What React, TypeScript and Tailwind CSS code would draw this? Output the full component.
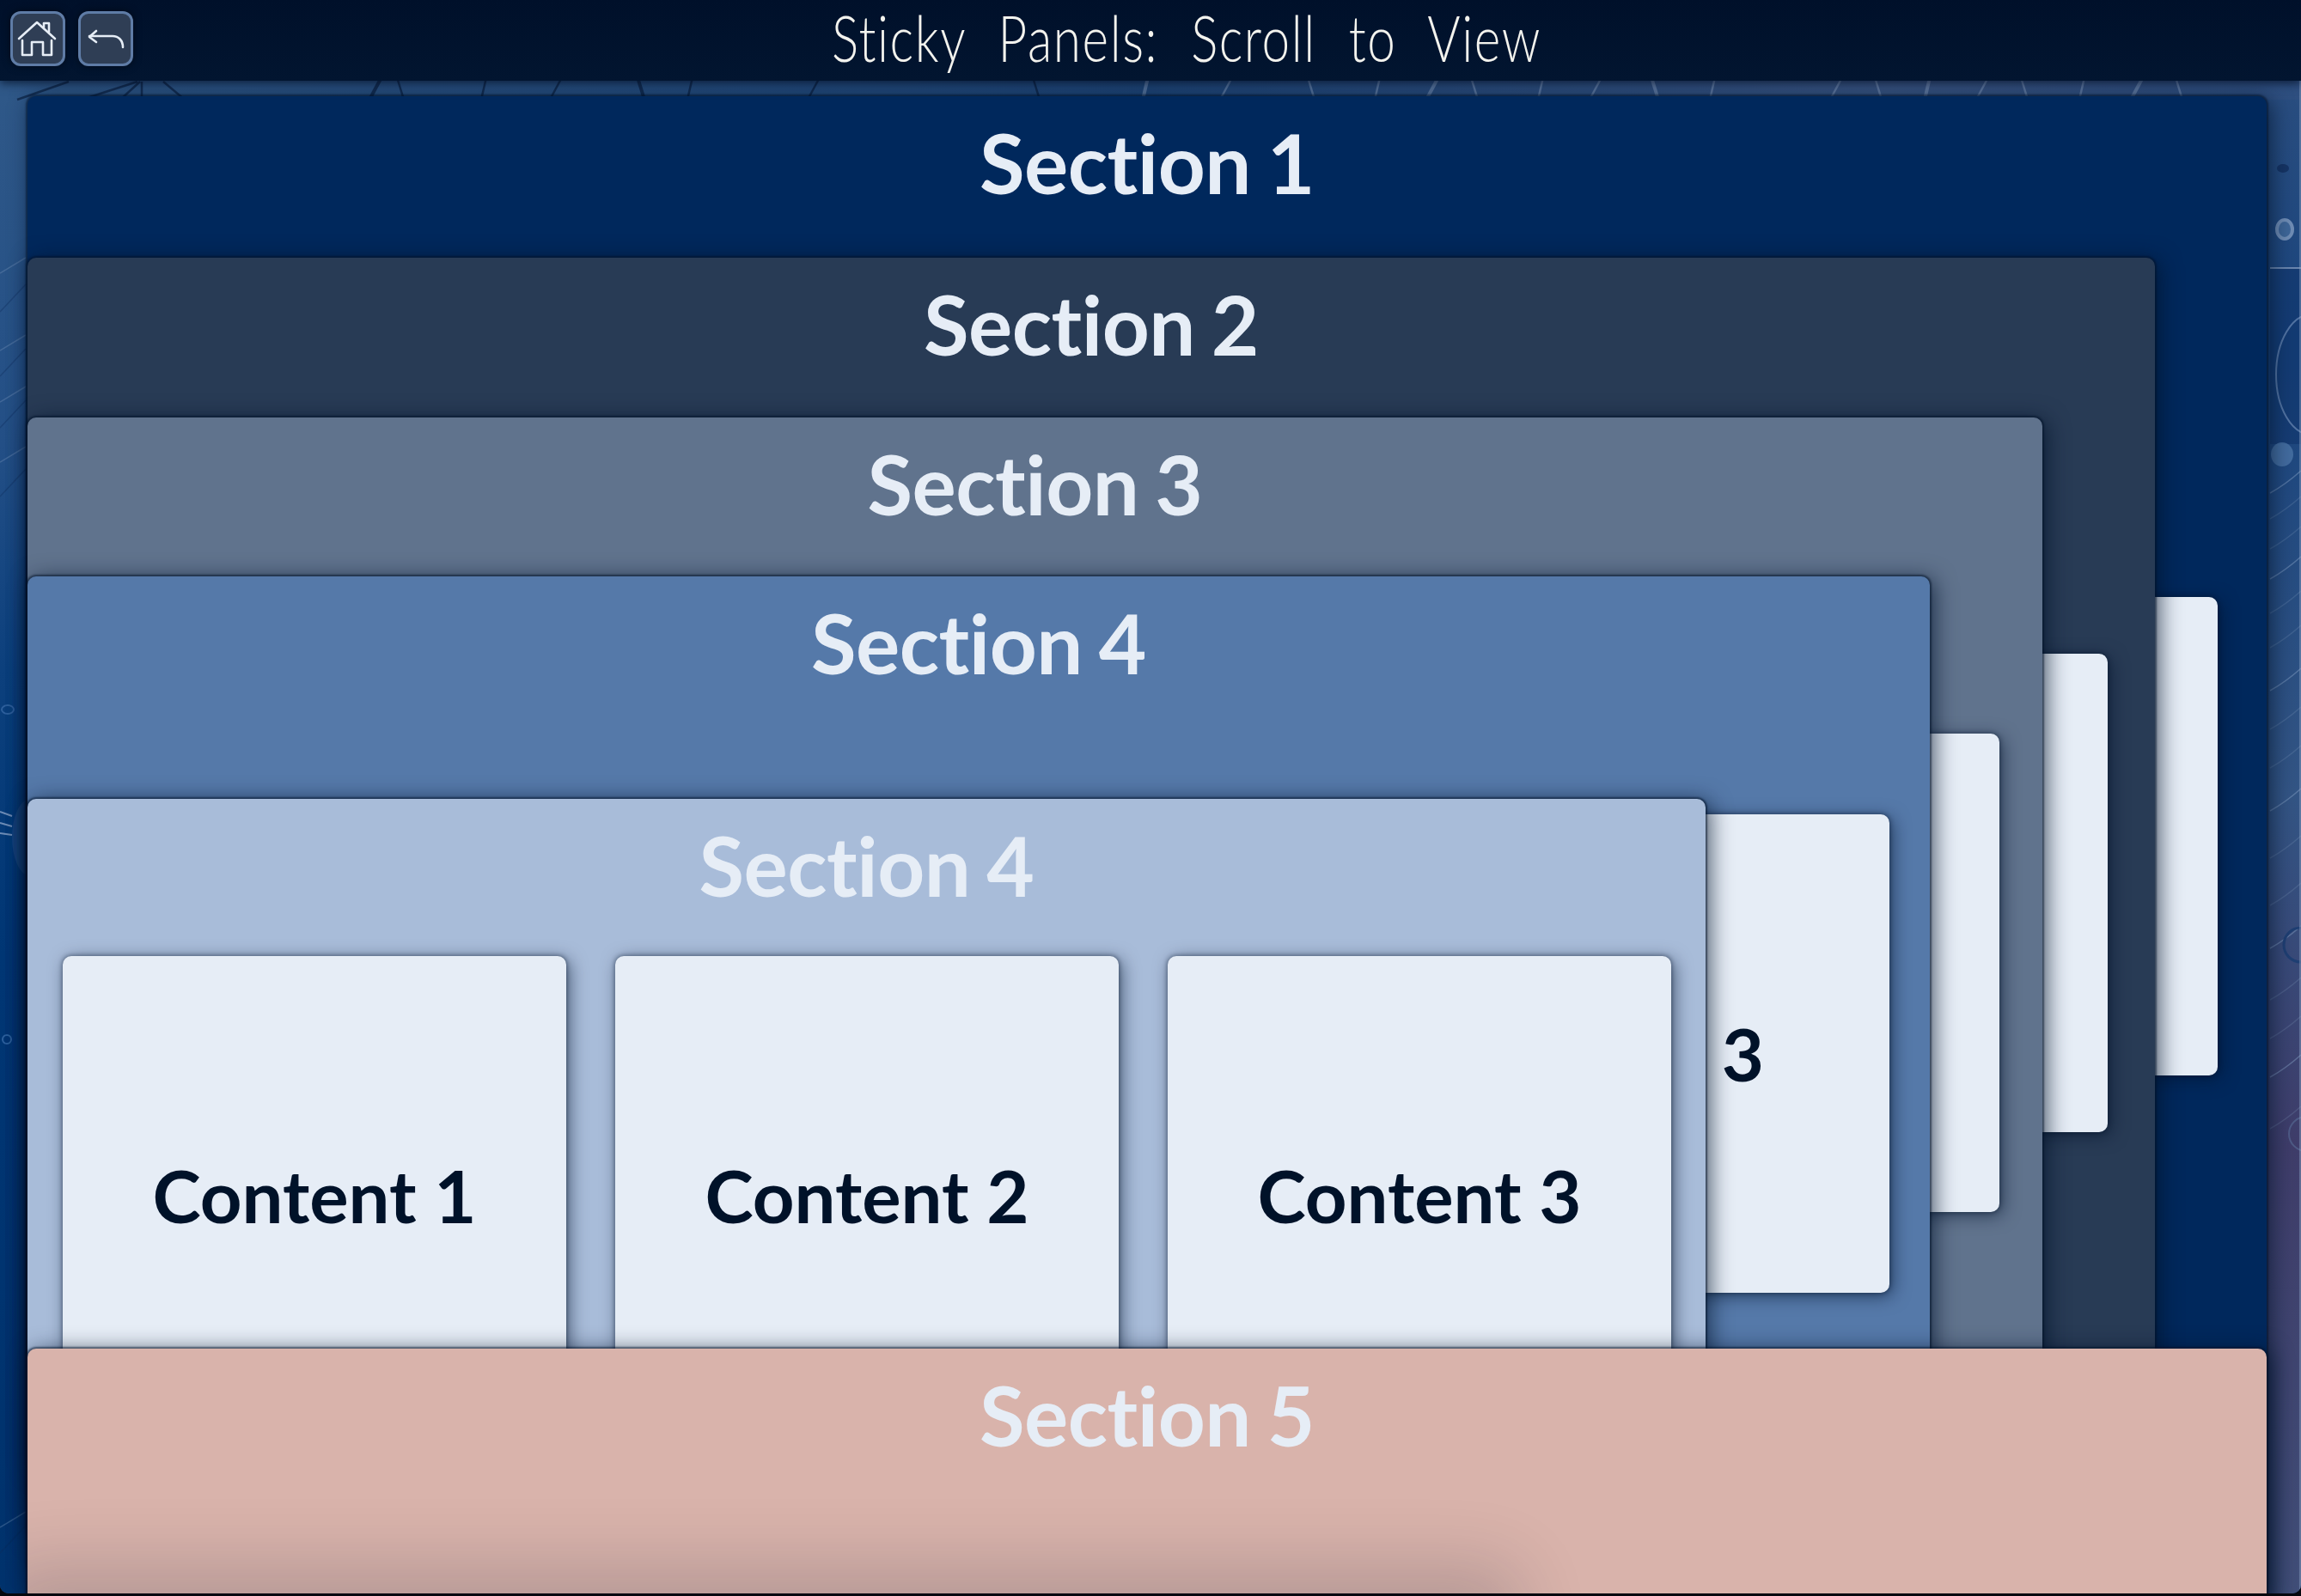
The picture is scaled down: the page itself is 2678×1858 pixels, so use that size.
const panelShadow = "shadow-[0_0_2px_2px_rgba(0,18,41,0.55),5px_3px_26px_rgba(0,18,41,0.7)]";
const cardShadow = "shadow-[0_0_5px_1px_rgba(0,18,41,0.4),4px_4px_20px_rgba(0,18,41,0.55)]";

function Backdrop() {
  const topLines = [430, 470, 560, 640, 750, 800, 940, 1210, 1330, 1420, 1530, 1600, 1660, 1720, 1790, 1850, 1930, 1990, 2130, 2190, 2240, 2300, 2360, 2420, 2480, 2540];
  const rightStreaks = [560, 590, 625, 660, 700, 740, 790, 835, 880, 930, 985, 1040, 1090, 1150, 1195, 1240, 1300];
  const leftStreaks = [300, 345, 390, 420, 450, 480, 520, 560, 1760, 1790];
  return (
    <svg className="absolute inset-0" width="2678" height="1855" viewBox="0 0 2678 1855" fill="none">
      <defs>
        <linearGradient id="top" x1="0" x2="1" y1="0" y2="0">
          <stop offset="0" stopColor="#2f5888" />
          <stop offset="0.5" stopColor="#1f4779" />
          <stop offset="0.82" stopColor="#3a5684" />
          <stop offset="1" stopColor="#2e4f80" />
        </linearGradient>
        <linearGradient id="left" x1="0" x2="0" y1="0" y2="1">
          <stop offset="0.05" stopColor="#2f5888" />
          <stop offset="0.28" stopColor="#234f86" />
          <stop offset="0.42" stopColor="#0c407d" />
          <stop offset="0.6" stopColor="#003674" />
          <stop offset="1" stopColor="#00326c" />
        </linearGradient>
        <linearGradient id="right" x1="0" x2="0" y1="0" y2="1">
          <stop offset="0.05" stopColor="#2a4e80" />
          <stop offset="0.22" stopColor="#1a457e" />
          <stop offset="0.5" stopColor="#335585" />
          <stop offset="0.72" stopColor="#3f3d6a" />
          <stop offset="1" stopColor="#414f79" />
        </linearGradient>
      </defs>
      <rect x="0" y="0" width="40" height="1855" fill="url(#left)" />
      <rect x="2630" y="0" width="48" height="1855" fill="url(#right)" />
      <rect x="0" y="90" width="2678" height="26" fill="url(#top)" />

      {/* streaks in the top strip */}
      {topLines.map((x, i) => (
        <path
          key={x}
          d={`M${x} 116 L${x + (i % 3 === 0 ? 14 : i % 3 === 1 ? -8 : 6)} 90`}
          stroke={x < 1300 ? "#0a1f3f" : "#8ba3c5"}
          strokeOpacity={x < 1300 ? 0.7 : 0.5}
          strokeWidth={i % 4 === 0 ? 4 : 2.5}
        />
      ))}
      <path d="M20 116 L80 95 M95 116 L160 95 M140 116 L163 95 M165 95 V116 M215 116 L190 95" stroke="#0a1f3f" strokeOpacity="0.7" strokeWidth="2.5" />

      {/* rings and streaks along the right edge */}
      <rect x="2642" y="312" width="36" height="205" fill="#0c2f66" fillOpacity="0.45" />
      <path d="M2642 312 H2678" stroke="#8ba3c5" strokeOpacity="0.7" strokeWidth="2" />
      <ellipse cx="2659" cy="267" rx="9" ry="11" stroke="#6f8db5" strokeWidth="4" fill="#3e6698" />
      <ellipse cx="2657" cy="196" rx="7" ry="5" fill="#0f2b58" fillOpacity="0.7" />
      <ellipse cx="2690" cy="436" rx="41" ry="70" stroke="#6d8cb6" strokeOpacity="0.7" strokeWidth="2" />
      <ellipse cx="2656" cy="529" rx="13" ry="14" fill="#4f78aa" fillOpacity="0.75" />
      {rightStreaks.map((y, i) => (
        <path key={y} d={`M2642 ${y + 14} Q2660 ${y + 4} 2678 ${y - 12}`} stroke="#88a2c6" strokeOpacity={i % 3 === 0 ? 0.45 : 0.22} strokeWidth="1.5" />
      ))}
      <circle cx="2678" cy="1100" r="20" stroke="#1f3f73" strokeWidth="3" />
      <circle cx="2684" cy="1320" r="20" stroke="#5a7099" strokeOpacity="0.6" strokeWidth="2" />
      <rect x="2676" y="90" width="2" height="1765" fill="#8ba3c5" fillOpacity="0.45" />

      {/* lines along the left edge */}
      {leftStreaks.map((y, i) => (
        <path key={y} d={`M0 ${y + 18} L30 ${y - (i % 2) * 14}`} stroke={i % 2 ? "#0d2a58" : "#7795bb"} strokeOpacity="0.35" strokeWidth="1.5" />
      ))}
      <ellipse cx="9" cy="826" rx="7" ry="5" stroke="#2d5f9c" strokeWidth="2" />
      <ellipse cx="34" cy="975" rx="20" ry="44" fill="#1d4c85" fillOpacity="0.7" />
      <path d="M0 945 L14 950 M0 958 L14 962 M0 970 L14 972" stroke="#6d8cb6" strokeWidth="2" />
      <circle cx="8" cy="1210" r="5" stroke="#2d5f9c" strokeWidth="2" />
    </svg>
  );
}

function Card({ label, className }: { label?: string; className: string }) {
  return (
    <div className={`h-[557px] shrink-0 rounded-[10px] bg-[#e6edf6] flex items-center justify-center text-[#001229] text-[85px] font-bold [font-variant-ligatures:none] ${cardShadow} ${className}`}>
      {label}
    </div>
  );
}

function Title({ label, className }: { label: string; className: string }) {
  return (
    <h2 className={`text-center text-[#e6edf6] text-[96px] font-bold leading-[106px] pt-[24px] tracking-[-0.005em] [word-spacing:-4px] [font-variant-ligatures:none] ${className}`}>
      {label}
    </h2>
  );
}

export default function App() {
  return (
    <div className="h-[1858px] w-[2678px] overflow-hidden bg-[#05080f] font-['Lato',sans-serif]">
      <div className="relative h-[1855px] overflow-hidden rounded-b-[10px] bg-[#1f4a80]">
        <Backdrop />

        <header className="relative z-30 flex h-[94px] bg-gradient-to-b from-[#00102a] to-[#021530] shadow-[0_3px_10px_rgba(0,10,30,0.7)]">
          <div className="flex gap-[15px] pl-[12px] pt-[13px]">
            <button className="h-[64px] w-[64px] rounded-[12px] border-[3px] border-[#5f7ca6] bg-[#2f3e55] shadow-[0_0_10px_rgba(0,0,0,0.5)]">
              <svg width="58" height="58" viewBox="15 16 58 58" fill="none" stroke="#e6edf6" strokeWidth="2.6" strokeLinejoin="round" strokeLinecap="round">
                <path d="M22 45 L43 26 L64 45" />
                <path d="M26 47 V64 H37 V49 H50 V64 H60 V47" />
                <path d="M51 32 V27 H57 V37" />
              </svg>
            </button>
            <button className="h-[64px] w-[64px] rounded-[12px] border-[3px] border-[#5f7ca6] bg-[#2f3e55] shadow-[0_0_10px_rgba(0,0,0,0.5)]">
              <svg width="58" height="58" viewBox="94 16 58 58" fill="none" stroke="#e6edf6" strokeWidth="2.6" strokeLinejoin="round" strokeLinecap="round">
                <path d="M112 36 L104 43 L112 49" />
                <path d="M104 42 H131 C138 42 143 47 143 55" />
              </svg>
            </button>
          </div>
          <h1 className="flex-1 pr-[90px] text-center text-[74px] leading-[88px] font-light text-[#f3f3ee] scale-x-[0.79] tracking-[2px] [word-spacing:26px] [font-variant-ligatures:none]">
            Sticky Panels: Scroll to View
          </h1>
        </header>

        {/* Section 1 */}
        <div className={`relative z-10 mt-[18px] ml-[32px] w-[2606px] rounded-[10px] bg-[#00285c] pb-[40px] ${panelShadow}`}>
          <Title label="Section 1" className="h-[188px]" />
          <div className="flex items-start">
            {/* Section 2 */}
            <div className={`relative z-10 w-[2476px] shrink-0 rounded-[10px] bg-[#283b55] pb-[40px] ${panelShadow}`}>
              <Title label="Section 2" className="h-[186px]" />
              <div className="flex items-start">
                {/* Section 3 */}
                <div className={`relative z-10 w-[2345px] shrink-0 rounded-[10px] bg-[#60738d] pb-[40px] ${panelShadow}`}>
                  <Title label="Section 3" className="h-[185px]" />
                  <div className="flex items-start">
                    {/* Section 4 */}
                    <div className={`relative z-10 w-[2214px] shrink-0 rounded-[10px] bg-[#5579a9] pb-[40px] ${panelShadow}`}>
                      <Title label="Section 4" className="h-[259px]" />
                      <div className="flex items-start">
                        {/* Section 4, front panel */}
                        <div className={`relative z-10 w-[1953px] shrink-0 rounded-[10px] bg-[#a8bcd9] pb-[40px] ${panelShadow}`}>
                          <Title label="Section 4" className="h-[183px]" />
                          <div className="flex gap-[57px] pl-[41px]">
                            <Card label="Content 1" className="w-[586px]" />
                            <Card label="Content 2" className="w-[586px]" />
                            <Card label="Content 3" className="w-[586px]" />
                          </div>
                        </div>
                        <Card label="Content 3" className="mt-[18px] ml-[-459px] w-[673px] pl-[4px]" />
                      </div>
                    </div>
                    <Card className="mt-[183px] ml-[-636px] w-[717px]" />
                  </div>
                </div>
                <Card className="mt-[275px] ml-[-685px] w-[761px]" />
              </div>
            </div>
            <Card className="mt-[395px] ml-[-731px] w-[804px]" />
          </div>
        </div>

        {/* Section 5 lies over the others; the next panel's shadow shows along its bottom */}
        <div className={`absolute top-[1570px] left-[32px] z-20 h-[300px] w-[2606px] overflow-hidden rounded-[10px] bg-[#d9b3ab] ${panelShadow}`}>
          <Title label="Section 5" className="h-[188px]" />
          <div className="absolute top-[290px] left-0 h-[100px] w-[1698px] rounded-[10px] shadow-[0_0_80px_40px_rgba(0,18,41,0.16)]" />
        </div>
      </div>
    </div>
  );
}
